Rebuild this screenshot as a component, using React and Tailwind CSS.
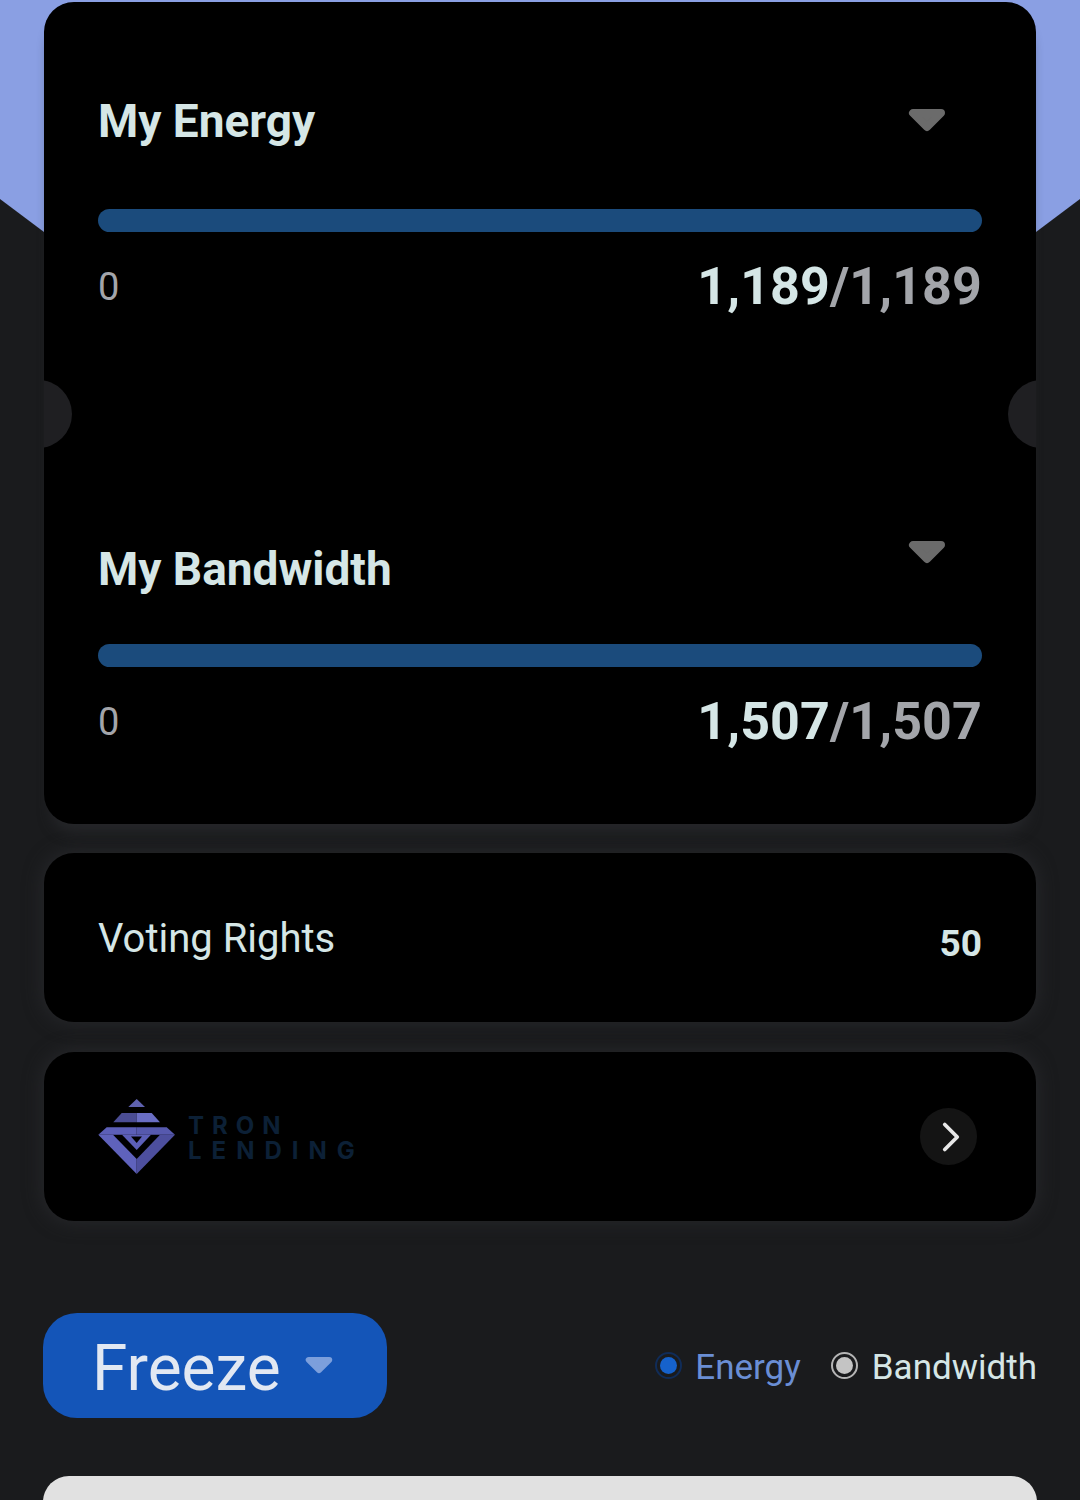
import React from 'react';
import { ChevronRight } from 'lucide-react';

// small rounded triangle used on the dropdowns
const Caret = ({ className, color }) => (
  <svg className={className} viewBox="0 0 38 24" fill={color} stroke={color} strokeWidth="8" strokeLinejoin="round">
    <path d="M5 5 H33 L19 19 Z" />
  </svg>
);

const ResourceBlock = ({ title, used, total, titleClass, caretClass }) => (
  <div>
    <div className="flex justify-between">
      <h2 className={`text-[46px] leading-[52px] font-bold text-[#d5e6e6] ${titleClass}`}>{title}</h2>
      <Caret className={`w-[38px] h-[24px] mr-[36px] ${caretClass}`} color="#6b6b6b" />
    </div>
    <div className="h-[23px] rounded-full bg-[#1b4b7c]" />
    <div className="flex justify-between items-center mt-[27px]">
      <span className="text-[38px] leading-[56px] text-[#a3a5aa]">0</span>
      <span className="text-[52px] leading-[56px] font-bold tracking-[0.1px]">
        <span className="text-[#d5e6e6]">{used}</span>
        <span className="text-[#a3a5aa]">/{total}</span>
      </span>
    </div>
  </div>
);

const Notch = ({ className }) => (
  <div className={`absolute top-[378px] w-[68px] h-[68px] rounded-full bg-[#1f1f22] ${className}`} />
);

const Logo = () => (
  <div className="flex items-center gap-[12px]">
    <svg className="mt-[1px]" width="78" height="76" viewBox="0 0 78 76">
      <path d="M38.7 0 L47 8 H30.3 Z" fill="#5f62b0" />
      <path d="M23.7 14 H38.7 V23.3 H15.3 Z" fill="#4b4d94" />
      <path d="M38.7 14 H53.7 L62 23.3 H38.7 Z" fill="#6a6ec4" />
      <path d="M8.7 28.3 H38.7 V35.7 H0.3 Z" fill="#5c5fb8" />
      <path d="M38.7 28.3 H68.7 L77 35.7 H38.7 Z" fill="#5659ae" />
      <path d="M0.3 35.7 H15 L38.7 60 V75 Z" fill="#5f62bc" />
      <path d="M77 35.7 H62 L38.7 60 V75 Z" fill="#4d4f9e" />
      <path d="M24 35.7 H53 L38.7 51 Z" fill="#5c5fb8" />
      <path d="M33 37.5 H44 L38.7 44 Z" fill="#000" />
    </svg>
    <div className="text-[#0c2036] font-bold text-[24px] leading-[25px] mt-[3px] font-['Inter',sans-serif]">
      <div className="tracking-[8px]">TRON</div>
      <div className="tracking-[10px]">LENDING</div>
    </div>
  </div>
);

export default function App() {
  return (
    <div className="relative w-[1080px] h-[1500px] overflow-hidden bg-[#1a1b1d] font-['Roboto',sans-serif]">
      {/* header colour behind the first card */}
      <div className="absolute top-0 left-0 w-full h-[400px] bg-[#8a9fe3] [clip-path:polygon(0_0,100%_0,100%_199px,50%_604px,0_199px)]" />

      <div className="relative flex flex-col px-[44px] pt-[2px]">
        <section className="relative h-[822px] rounded-[30px] bg-black px-[54px] pt-[93px] overflow-hidden shadow-[0_16px_14px_-8px_#26272a]">
          <Notch className="-left-[40px]" />
          <Notch className="-right-[40px]" />
          <ResourceBlock title="My Energy" used="1,189" total="1,189" titleClass="mb-[62px]" caretClass="mt-[13px]" />
          <div className="h-[228px]" />
          <ResourceBlock title="My Bandwidth" used="1,507" total="1,507" titleClass="mb-[49px]" caretClass="-mt-[3px]" />
        </section>

        <section className="mt-[29px] h-[169px] rounded-[30px] bg-black pl-[54px] pr-[54px] flex justify-between items-center shadow-[0_0_18px_2px_#26272a]">
          <span className="text-[40px] text-[#d5e6e6] mt-[3px]">Voting Rights</span>
          <span className="text-[37px] font-bold text-[#d5e6e6] mt-[12px]">50</span>
        </section>

        <section className="mt-[30px] h-[169px] rounded-[30px] bg-black pl-[54px] pr-[59px] flex justify-between items-center shadow-[0_0_18px_2px_#26272a]">
          <Logo />
          <div className="w-[57px] h-[57px] rounded-full bg-[#141414] flex items-center justify-center">
            <ChevronRight className="w-[50px] h-[50px] shrink-0 ml-[4px] text-[#e8e8e8]" strokeWidth={1.8} />
          </div>
        </section>

        <div className="mt-[92px] -ml-[1px] flex justify-between items-center">
          <button className="w-[344px] h-[105px] rounded-[34px] bg-[#1455b8] pl-[49px] flex items-center gap-[24px]">
            <span className="text-[64px] text-[#e2e8f2] mt-[6px]">Freeze</span>
            <Caret className="w-[28px] h-[18px] -mt-[1px]" color="#7c9fdc" />
          </button>
          <div className="flex items-center text-[35px] -mr-[1px]">
            <span className="w-[27px] h-[27px] rounded-full border-[2px] border-[#102c58] bg-[#1a1b1d] flex items-center justify-center">
              <span className="w-[17px] h-[17px] rounded-full bg-[#1662cc]" />
            </span>
            <span className="ml-[13px] mt-[5px] text-[#6a8ed4]">Energy</span>
            <span className="ml-[30px] w-[27px] h-[27px] rounded-full border-[2px] border-[#b5b5b5] flex items-center justify-center">
              <span className="w-[17px] h-[17px] rounded-full bg-[#c4c4c4]" />
            </span>
            <span className="ml-[14px] mt-[5px] text-[#d5e6e6]">Bandwidth</span>
          </div>
        </div>

        <div className="mt-[58px] -mx-[1px] h-[60px] rounded-t-[26px] bg-[#e1e1e1]" />
      </div>
    </div>
  );
}
